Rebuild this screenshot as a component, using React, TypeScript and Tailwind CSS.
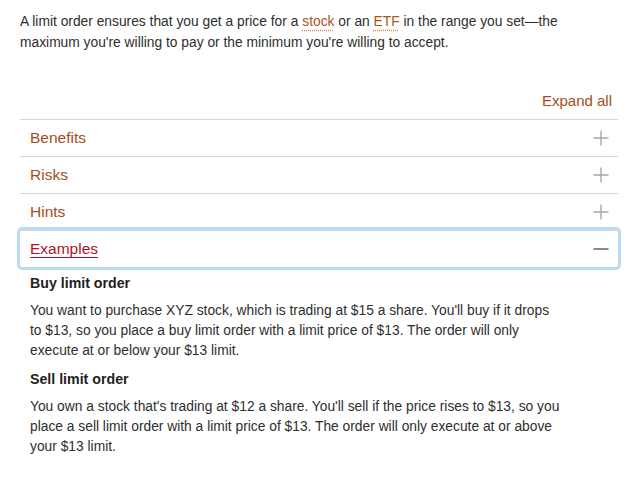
import React from "react";

function Plus() {
  return (
    <svg width="16" height="16" viewBox="0 0 16 16" aria-hidden="true">
      <path d="M8 0.5V15.5M0.5 8H15.5" stroke="#a8a8a8" strokeWidth="1.4" fill="none" />
    </svg>
  );
}

function Minus() {
  return (
    <svg width="16" height="16" viewBox="0 0 16 16" aria-hidden="true">
      <path d="M0.5 8H15.5" stroke="#6e6e6e" strokeWidth="1.6" fill="none" />
    </svg>
  );
}

function Row({ label }: { label: string }) {
  return (
    <div className="flex h-[37px] items-center justify-between border-t border-[#d6d6d6] pl-[10px] pr-[9px]">
      <span className="text-[15.5px] leading-[20px] text-[#a24f1d]">{label}</span>
      <Plus />
    </div>
  );
}

export default function App() {
  return (
    <div
      className="h-[480px] w-[627px] bg-white text-[#2e2e2e]"
      style={{ fontFamily: '"Liberation Sans", Arial, sans-serif' }}
    >
      <p className="whitespace-nowrap pl-[20px] pt-[11px] text-[13.8px] leading-[21px]">
        A limit order ensures that you get a price for a{" "}
        <span className="text-[#a9561f] underline decoration-[#d08a55] decoration-dotted underline-offset-[4px]">stock</span>{" "}
        or an{" "}
        <span className="text-[#a9561f] underline decoration-[#d08a55] decoration-dotted underline-offset-[4px]">ETF</span>{" "}
        in the range you set—the
        <br />
        maximum you're willing to pay or the minimum you're willing to accept.
      </p>

      <div className="ml-[20px] mt-[38px] w-[598px]">
        <div className="flex justify-end pr-[6px]">
          <span className="text-[15px] leading-[20px] text-[#a24f1d]">Expand all</span>
        </div>
        <div className="mt-[8px]">
          <Row label="Benefits" />
          <Row label="Risks" />
          <Row label="Hints" />
          <div className="flex h-[37px] items-center justify-between rounded-[2px] border-t border-[#d6d6d6] pl-[10px] pr-[9px] shadow-[0_0_0_3px_#b8dbf8]">
            <span className="text-[15.5px] leading-[20px] text-[#b0141f] underline decoration-[#b0141f] underline-offset-[3px]">
              Examples
            </span>
            <Minus />
          </div>
        </div>
      </div>

      <div className="whitespace-nowrap pl-[30px] text-[13.8px]">
        <h3 className="mt-[6px] text-[14.2px] font-bold leading-[20px] text-[#222]">Buy limit order</h3>
        <p className="mt-[8px] leading-[20px]">
          You want to purchase XYZ stock, which is trading at $15 a share. You'll buy if it drops
          <br />
          to $13, so you place a buy limit order with a limit price of $13. The order will only
          <br />
          execute at or below your $13 limit.
        </p>
        <h3 className="mt-[8px] text-[14.2px] font-bold leading-[20px] text-[#222]">Sell limit order</h3>
        <p className="mt-[8px] leading-[20px]">
          You own a stock that's trading at $12 a share. You'll sell if the price rises to $13, so you
          <br />
          place a sell limit order with a limit price of $13. The order will only execute at or above
          <br />
          your $13 limit.
        </p>
      </div>
    </div>
  );
}
